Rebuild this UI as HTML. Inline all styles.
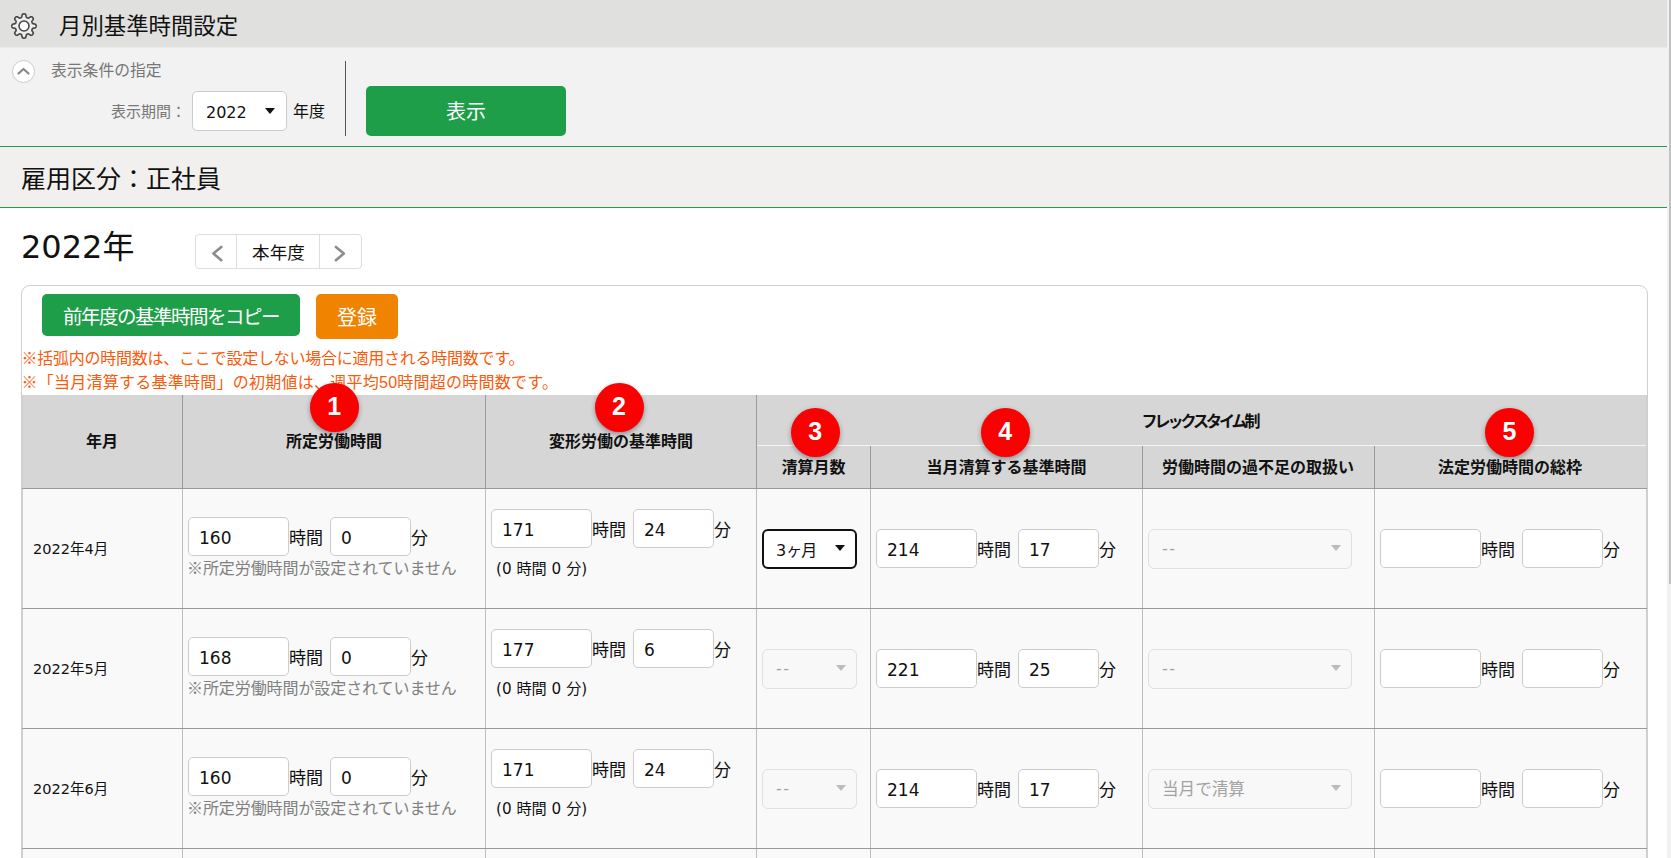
<!DOCTYPE html>
<html lang="ja">
<head>
<meta charset="utf-8">
<title>月別基準時間設定</title>
<style>
html,body{margin:0;padding:0;}
body{width:1671px;height:858px;overflow:hidden;background:#fff;position:relative;
  font-family:"DejaVu Sans","Noto Sans CJK JP",sans-serif;color:#111;font-size:16px;}
.jp{font-family:"Liberation Sans","Noto Sans CJK JP",sans-serif;}
.abs{position:absolute;white-space:nowrap;}
#page{position:absolute;left:0;top:0;width:1667px;height:858px;overflow:hidden;}
#sb{position:absolute;left:1667px;top:0;width:4px;height:858px;background:#f1f1f1;}
#sb i{position:absolute;left:2px;top:0;width:2px;height:584px;background:#c1c1c1;}
#titlebar{left:0;top:0;width:1667px;height:47px;background:#e0e0de;border-bottom:1px solid #e9e9e8;}
#cond{left:0;top:48px;width:1667px;height:98px;background:#f2f2f2;border-bottom:1px solid #1e9e48;}
#emp{left:0;top:147px;width:1667px;height:60px;background:#f2f0ef;border-bottom:1px solid #1e9e48;}
.btn{position:absolute;color:#fff;text-align:center;border-radius:5px;white-space:nowrap;}
.green{background:#1e9e48;}
.orange{background:#f08300;}
.inp{position:absolute;box-sizing:border-box;height:39px;border:1px solid #ccc;border-radius:5px;background:#fff;
  font-size:17px;line-height:40px;padding-left:10px;white-space:nowrap;overflow:hidden;}
.u{position:absolute;font-size:17px;line-height:43px;height:39px;white-space:nowrap;}
.dsel{position:absolute;box-sizing:border-box;height:40px;border:1px solid #e0e0e0;border-radius:6px;background:#f8f8f8;
  font-size:16px;line-height:37px;padding-left:13px;color:#a2a2a2;white-space:nowrap;}
.dsel.dd{letter-spacing:1.5px;}
.dsel.jp{font-size:16.6px;line-height:40px;}
.dsel:after{content:"";position:absolute;right:10px;top:15px;border-left:5px solid transparent;border-right:5px solid transparent;border-top:6px solid #bcbcbc;}
.hl{position:absolute;background:#999;height:1px;}
.vl{position:absolute;background:#bdbdbd;width:1px;}
.th{position:absolute;font-weight:bold;font-size:16px;text-align:center;white-space:nowrap;line-height:20px;}
.badge{position:absolute;width:49px;height:49px;border-radius:50%;background:#fa0000;color:#fff;font-weight:bold;
  text-align:center;line-height:46px;font-size:25px;box-shadow:0 2px 5px rgba(0,0,0,.35);font-family:"Liberation Sans",sans-serif;}
.note{position:absolute;font-size:16px;letter-spacing:-0.08px;color:#808080;white-space:nowrap;line-height:20px;}
.sub{position:absolute;font-size:15.2px;white-space:nowrap;line-height:20px;}
.ym{position:absolute;font-size:14.5px;white-space:nowrap;line-height:20px;left:33px;margin-top:1px;}
</style>
</head>
<body>
<div id="page">
  <div id="titlebar" class="abs"></div>
  <svg class="abs" style="left:11px;top:13px" width="26" height="26" viewBox="0 0 26 26"><path d="M25.10 13.00L25.09 13.32L25.06 13.63L24.99 13.94L24.88 14.25L24.65 14.53L24.25 14.78L23.62 14.97L22.88 15.10L22.25 15.22L21.83 15.37L21.59 15.54L21.43 15.74L21.32 15.95L21.22 16.16L21.13 16.37L21.04 16.58L20.97 16.80L20.90 17.03L20.87 17.27L20.92 17.57L21.11 17.97L21.47 18.50L21.90 19.12L22.22 19.70L22.32 20.16L22.28 20.51L22.15 20.81L21.97 21.08L21.77 21.33L21.56 21.56L21.33 21.77L21.08 21.97L20.81 22.15L20.51 22.28L20.16 22.32L19.70 22.22L19.12 21.90L18.50 21.47L17.97 21.11L17.57 20.92L17.27 20.87L17.03 20.90L16.80 20.97L16.58 21.04L16.37 21.13L16.16 21.22L15.95 21.32L15.74 21.43L15.54 21.59L15.37 21.83L15.22 22.25L15.10 22.88L14.97 23.62L14.78 24.25L14.53 24.65L14.25 24.88L13.94 24.99L13.63 25.06L13.32 25.09L13.00 25.10L12.68 25.09L12.37 25.06L12.06 24.99L11.75 24.88L11.47 24.65L11.22 24.25L11.03 23.62L10.90 22.88L10.78 22.25L10.63 21.83L10.46 21.59L10.26 21.43L10.05 21.32L9.84 21.22L9.63 21.13L9.42 21.04L9.20 20.97L8.97 20.90L8.73 20.87L8.43 20.92L8.03 21.11L7.50 21.47L6.88 21.90L6.30 22.22L5.84 22.32L5.49 22.28L5.19 22.15L4.92 21.97L4.67 21.77L4.44 21.56L4.23 21.33L4.03 21.08L3.85 20.81L3.72 20.51L3.68 20.16L3.78 19.70L4.10 19.12L4.53 18.50L4.89 17.97L5.08 17.57L5.13 17.27L5.10 17.03L5.03 16.80L4.96 16.58L4.87 16.37L4.78 16.16L4.68 15.95L4.57 15.74L4.41 15.54L4.17 15.37L3.75 15.22L3.12 15.10L2.38 14.97L1.75 14.78L1.35 14.53L1.12 14.25L1.01 13.94L0.94 13.63L0.91 13.32L0.90 13.00L0.91 12.68L0.94 12.37L1.01 12.06L1.12 11.75L1.35 11.47L1.75 11.22L2.38 11.03L3.12 10.90L3.75 10.78L4.17 10.63L4.41 10.46L4.57 10.26L4.68 10.05L4.78 9.84L4.87 9.63L4.96 9.42L5.03 9.20L5.10 8.97L5.13 8.73L5.08 8.43L4.89 8.03L4.53 7.50L4.10 6.88L3.78 6.30L3.68 5.84L3.72 5.49L3.85 5.19L4.03 4.92L4.23 4.67L4.44 4.44L4.67 4.23L4.92 4.03L5.19 3.85L5.49 3.72L5.84 3.68L6.30 3.78L6.88 4.10L7.50 4.53L8.03 4.89L8.43 5.08L8.73 5.13L8.97 5.10L9.20 5.03L9.42 4.96L9.63 4.87L9.84 4.78L10.05 4.68L10.26 4.57L10.46 4.41L10.63 4.17L10.78 3.75L10.90 3.12L11.03 2.38L11.22 1.75L11.47 1.35L11.75 1.12L12.06 1.01L12.37 0.94L12.68 0.91L13.00 0.90L13.32 0.91L13.63 0.94L13.94 1.01L14.25 1.12L14.53 1.35L14.78 1.75L14.97 2.38L15.10 3.12L15.22 3.75L15.37 4.17L15.54 4.41L15.74 4.57L15.95 4.68L16.16 4.78L16.37 4.87L16.58 4.96L16.80 5.03L17.03 5.10L17.27 5.13L17.57 5.08L17.97 4.89L18.50 4.53L19.12 4.10L19.70 3.78L20.16 3.68L20.51 3.72L20.81 3.85L21.08 4.03L21.33 4.23L21.56 4.44L21.77 4.67L21.97 4.92L22.15 5.19L22.28 5.49L22.32 5.84L22.22 6.30L21.90 6.88L21.47 7.50L21.11 8.03L20.92 8.43L20.87 8.73L20.90 8.97L20.97 9.20L21.04 9.42L21.13 9.63L21.22 9.84L21.32 10.05L21.43 10.26L21.59 10.46L21.83 10.63L22.25 10.78L22.88 10.90L23.62 11.03L24.25 11.22L24.65 11.47L24.88 11.75L24.99 12.06L25.06 12.37L25.09 12.68Z" fill="#ececec" stroke="#444" stroke-width="1.6" stroke-linejoin="round"/><circle cx="13" cy="13" r="5" fill="#fff" stroke="#444" stroke-width="1.5"/></svg>
  <div class="abs jp" style="left:59px;top:11px;font-size:22.4px;line-height:32px;">月別基準時間設定</div>

  <div id="cond" class="abs"></div>
  <div class="abs" style="left:12px;top:60px;width:21px;height:21px;border:1px solid #ccc;border-radius:50%;background:#fff;box-sizing:content-box;"></div>
  <svg class="abs" style="left:12px;top:60px" width="23" height="23" viewBox="0 0 23 23" fill="none" stroke="#888" stroke-width="2.2" stroke-linecap="round" stroke-linejoin="round"><path d="M6.5 13.5l5-4.5 5 4.5"/></svg>
  <div class="abs jp" style="left:51px;top:60px;font-size:15.8px;line-height:22px;color:#777;">表示条件の指定</div>
  <div class="abs jp" style="left:111px;top:101px;font-size:15px;line-height:22px;color:#777;">表示期間：</div>
  <div class="abs" style="left:192px;top:91px;width:95px;height:40px;box-sizing:border-box;border:1px solid #ccc;border-radius:5px;background:#fff;font-size:16px;line-height:41px;padding-left:13px;">2022</div>
  <div class="abs" style="left:265px;top:108px;border-left:5px solid transparent;border-right:5px solid transparent;border-top:6px solid #111;"></div>
  <div class="abs jp" style="left:293px;top:101px;font-size:16px;line-height:22px;">年度</div>
  <div class="abs" style="left:345px;top:61px;width:1px;height:75px;background:#555;"></div>
  <div class="btn green jp" style="left:366px;top:86px;width:200px;height:50px;line-height:52px;font-size:20px;">表示</div>

  <div id="emp" class="abs"></div>
  <div class="abs jp" style="left:21px;top:161px;font-size:25px;line-height:36px;">雇用区分：正社員</div>

  <div class="abs" style="left:21px;top:227px;font-size:32px;line-height:40px;">2022年</div>
  <div class="abs" style="left:195px;top:234px;width:167px;height:35px;box-sizing:border-box;border:1px solid #ddd;border-radius:4px;background:#fff;"></div>
  <div class="abs" style="left:236px;top:235px;width:1px;height:33px;background:#ddd;"></div>
  <div class="abs" style="left:319px;top:235px;width:1px;height:33px;background:#ddd;"></div>
  <svg class="abs" style="left:195px;top:234px" width="167" height="35" viewBox="195 234 167 35" fill="none" stroke="#8b8b90" stroke-width="2.6" stroke-linejoin="round" stroke-linecap="round"><path d="M221.3 247L213.4 253.6l7.9 6.6"/><path d="M335.9 247l7.9 6.6-7.9 6.6"/></svg>
  
  <div class="abs jp" style="left:237.5px;top:241px;width:82px;text-align:center;font-size:17.6px;line-height:24px;">本年度</div>

  <div class="abs" style="left:21px;top:285px;width:1627px;height:600px;box-sizing:border-box;border:1px solid #d0d0d0;border-radius:9px;background:#fff;"></div>
  <div class="btn green jp" style="left:42px;top:294px;width:258px;height:42px;line-height:46px;font-size:19.5px;letter-spacing:-1.5px;">前年度の基準時間をコピー</div>
  <div class="btn orange jp" style="left:316px;top:294px;width:82px;height:45px;line-height:49px;font-size:20px;">登録</div>
  <div class="abs jp" style="left:21.5px;top:348px;font-size:16px;line-height:22px;color:#fa5a0a;letter-spacing:-0.24px;">※括弧内の時間数は、ここで設定しない場合に適用される時間数です。</div>
  <div class="abs jp" style="left:21.5px;top:372px;font-size:16px;line-height:22px;color:#fa5a0a;letter-spacing:0.25px;">※「当月清算する基準時間」の初期値は、週平均50時間超の時間数です。</div>

  <!-- table -->
  <div id="tbl" class="abs" style="left:22px;top:395px;width:1625px;height:470px;background:#f9f9f9;"></div>
  <div class="abs" style="left:22px;top:395px;width:1625px;height:93px;background:#d5d6d5;"></div>
  <!--TBL-->
  <div class="vl" style="left:182px;top:395px;height:93px;background:#9a9a9a;"></div>
  <div class="vl" style="left:182px;top:489px;height:380px;"></div>
  <div class="vl" style="left:485px;top:395px;height:93px;background:#9a9a9a;"></div>
  <div class="vl" style="left:485px;top:489px;height:380px;"></div>
  <div class="vl" style="left:756px;top:395px;height:93px;background:#9a9a9a;"></div>
  <div class="vl" style="left:756px;top:489px;height:380px;"></div>
  <div class="vl" style="left:870px;top:446px;height:42px;background:#9a9a9a;"></div>
  <div class="vl" style="left:870px;top:489px;height:380px;"></div>
  <div class="vl" style="left:1142px;top:446px;height:42px;background:#9a9a9a;"></div>
  <div class="vl" style="left:1142px;top:489px;height:380px;"></div>
  <div class="vl" style="left:1374px;top:446px;height:42px;background:#9a9a9a;"></div>
  <div class="vl" style="left:1374px;top:489px;height:380px;"></div>
  <div class="vl" style="left:22px;top:395px;height:470px;background:#cfcfcf;"></div>
  <div class="vl" style="left:1646px;top:395px;height:470px;background:#cfcfcf;"></div>
  <div class="hl" style="left:757px;top:445px;width:889px;background:#f4f4f4;"></div>
  <div class="hl" style="left:22px;top:488px;width:1625px;"></div>
  <div class="hl" style="left:22px;top:608px;width:1625px;"></div>
  <div class="hl" style="left:22px;top:728px;width:1625px;"></div>
  <div class="hl" style="left:22px;top:848px;width:1625px;"></div>
  <div class="th jp" style="left:-48px;width:300px;top:431.5px;">年月</div>
  <div class="th jp" style="left:184px;width:300px;top:431.5px;">所定労働時間</div>
  <div class="th jp" style="left:471px;width:300px;top:431.5px;">変形労働の基準時間</div>
  <div class="th jp" style="left:1049.5px;width:300px;top:412px;letter-spacing:-3px;">フレックスタイム制</div>
  <div class="th jp" style="left:663.5px;width:300px;top:458px;">清算月数</div>
  <div class="th jp" style="left:856.5px;width:300px;top:458px;">当月清算する基準時間</div>
  <div class="th jp" style="left:1108px;width:300px;top:458px;">労働時間の過不足の取扱い</div>
  <div class="th jp" style="left:1360px;width:300px;top:458px;">法定労働時間の総枠</div>
  <div class="badge" style="left:309.6px;top:383.3px;">1</div>
  <div class="badge" style="left:594.5px;top:383.3px;">2</div>
  <div class="badge" style="left:790.7px;top:407.7px;">3</div>
  <div class="badge" style="left:980.7px;top:407.7px;">4</div>
  <div class="badge" style="left:1484.9px;top:407.7px;">5</div>
  <div class="ym" style="top:538px;">2022年4月</div>
  <div class="inp" style="left:188px;top:517px;width:101px;">160</div>
  <div class="u jp" style="left:289px;top:517px;">時間</div>
  <div class="inp" style="left:330px;top:517px;width:81px;">0</div>
  <div class="u jp" style="left:411px;top:517px;">分</div>
  <div class="note jp" style="left:187px;top:559px;">※所定労働時間が設定されていません</div>
  <div class="inp" style="left:491px;top:509px;width:101px;">171</div>
  <div class="u jp" style="left:592px;top:509px;">時間</div>
  <div class="inp" style="left:633px;top:509px;width:81px;">24</div>
  <div class="u jp" style="left:714px;top:509px;">分</div>
  <div class="sub" style="left:496px;top:559px;">(0 <span class="jp">時間</span> 0 <span class="jp">分</span>)</div>
  <div class="abs" style="left:762px;top:529px;width:95px;height:40px;box-sizing:border-box;border:2px solid #111;border-radius:6px;background:#fff;font-size:16px;line-height:39px;padding-left:12px;">3<span class="jp" style="letter-spacing:-1px;">ヶ月</span></div>
  <div class="abs" style="left:835px;top:545px;border-left:5px solid transparent;border-right:5px solid transparent;border-top:6px solid #111;"></div>
  <div class="inp" style="left:876px;top:529px;width:101px;">214</div>
  <div class="u jp" style="left:977px;top:529px;">時間</div>
  <div class="inp" style="left:1018px;top:529px;width:81px;">17</div>
  <div class="u jp" style="left:1099px;top:529px;">分</div>
  <div class="dsel dd" style="left:1148px;top:529px;width:204px;">--</div>
  <div class="inp" style="left:1380px;top:529px;width:101px;"></div>
  <div class="u jp" style="left:1481px;top:529px;">時間</div>
  <div class="inp" style="left:1522px;top:529px;width:81px;"></div>
  <div class="u jp" style="left:1603px;top:529px;">分</div>
  <div class="ym" style="top:658px;">2022年5月</div>
  <div class="inp" style="left:188px;top:637px;width:101px;">168</div>
  <div class="u jp" style="left:289px;top:637px;">時間</div>
  <div class="inp" style="left:330px;top:637px;width:81px;">0</div>
  <div class="u jp" style="left:411px;top:637px;">分</div>
  <div class="note jp" style="left:187px;top:679px;">※所定労働時間が設定されていません</div>
  <div class="inp" style="left:491px;top:629px;width:101px;">177</div>
  <div class="u jp" style="left:592px;top:629px;">時間</div>
  <div class="inp" style="left:633px;top:629px;width:81px;">6</div>
  <div class="u jp" style="left:714px;top:629px;">分</div>
  <div class="sub" style="left:496px;top:679px;">(0 <span class="jp">時間</span> 0 <span class="jp">分</span>)</div>
  <div class="dsel dd" style="left:762px;top:649px;width:95px;">--</div>
  <div class="inp" style="left:876px;top:649px;width:101px;">221</div>
  <div class="u jp" style="left:977px;top:649px;">時間</div>
  <div class="inp" style="left:1018px;top:649px;width:81px;">25</div>
  <div class="u jp" style="left:1099px;top:649px;">分</div>
  <div class="dsel dd" style="left:1148px;top:649px;width:204px;">--</div>
  <div class="inp" style="left:1380px;top:649px;width:101px;"></div>
  <div class="u jp" style="left:1481px;top:649px;">時間</div>
  <div class="inp" style="left:1522px;top:649px;width:81px;"></div>
  <div class="u jp" style="left:1603px;top:649px;">分</div>
  <div class="ym" style="top:778px;">2022年6月</div>
  <div class="inp" style="left:188px;top:757px;width:101px;">160</div>
  <div class="u jp" style="left:289px;top:757px;">時間</div>
  <div class="inp" style="left:330px;top:757px;width:81px;">0</div>
  <div class="u jp" style="left:411px;top:757px;">分</div>
  <div class="note jp" style="left:187px;top:799px;">※所定労働時間が設定されていません</div>
  <div class="inp" style="left:491px;top:749px;width:101px;">171</div>
  <div class="u jp" style="left:592px;top:749px;">時間</div>
  <div class="inp" style="left:633px;top:749px;width:81px;">24</div>
  <div class="u jp" style="left:714px;top:749px;">分</div>
  <div class="sub" style="left:496px;top:799px;">(0 <span class="jp">時間</span> 0 <span class="jp">分</span>)</div>
  <div class="dsel dd" style="left:762px;top:769px;width:95px;">--</div>
  <div class="inp" style="left:876px;top:769px;width:101px;">214</div>
  <div class="u jp" style="left:977px;top:769px;">時間</div>
  <div class="inp" style="left:1018px;top:769px;width:81px;">17</div>
  <div class="u jp" style="left:1099px;top:769px;">分</div>
  <div class="dsel jp" style="left:1148px;top:769px;width:204px;">当月で清算</div>
  <div class="inp" style="left:1380px;top:769px;width:101px;"></div>
  <div class="u jp" style="left:1481px;top:769px;">時間</div>
  <div class="inp" style="left:1522px;top:769px;width:81px;"></div>
  <div class="u jp" style="left:1603px;top:769px;">分</div>
  <!--/TBL-->
</div>
<div id="sb"><i></i></div>
</body>
</html>
